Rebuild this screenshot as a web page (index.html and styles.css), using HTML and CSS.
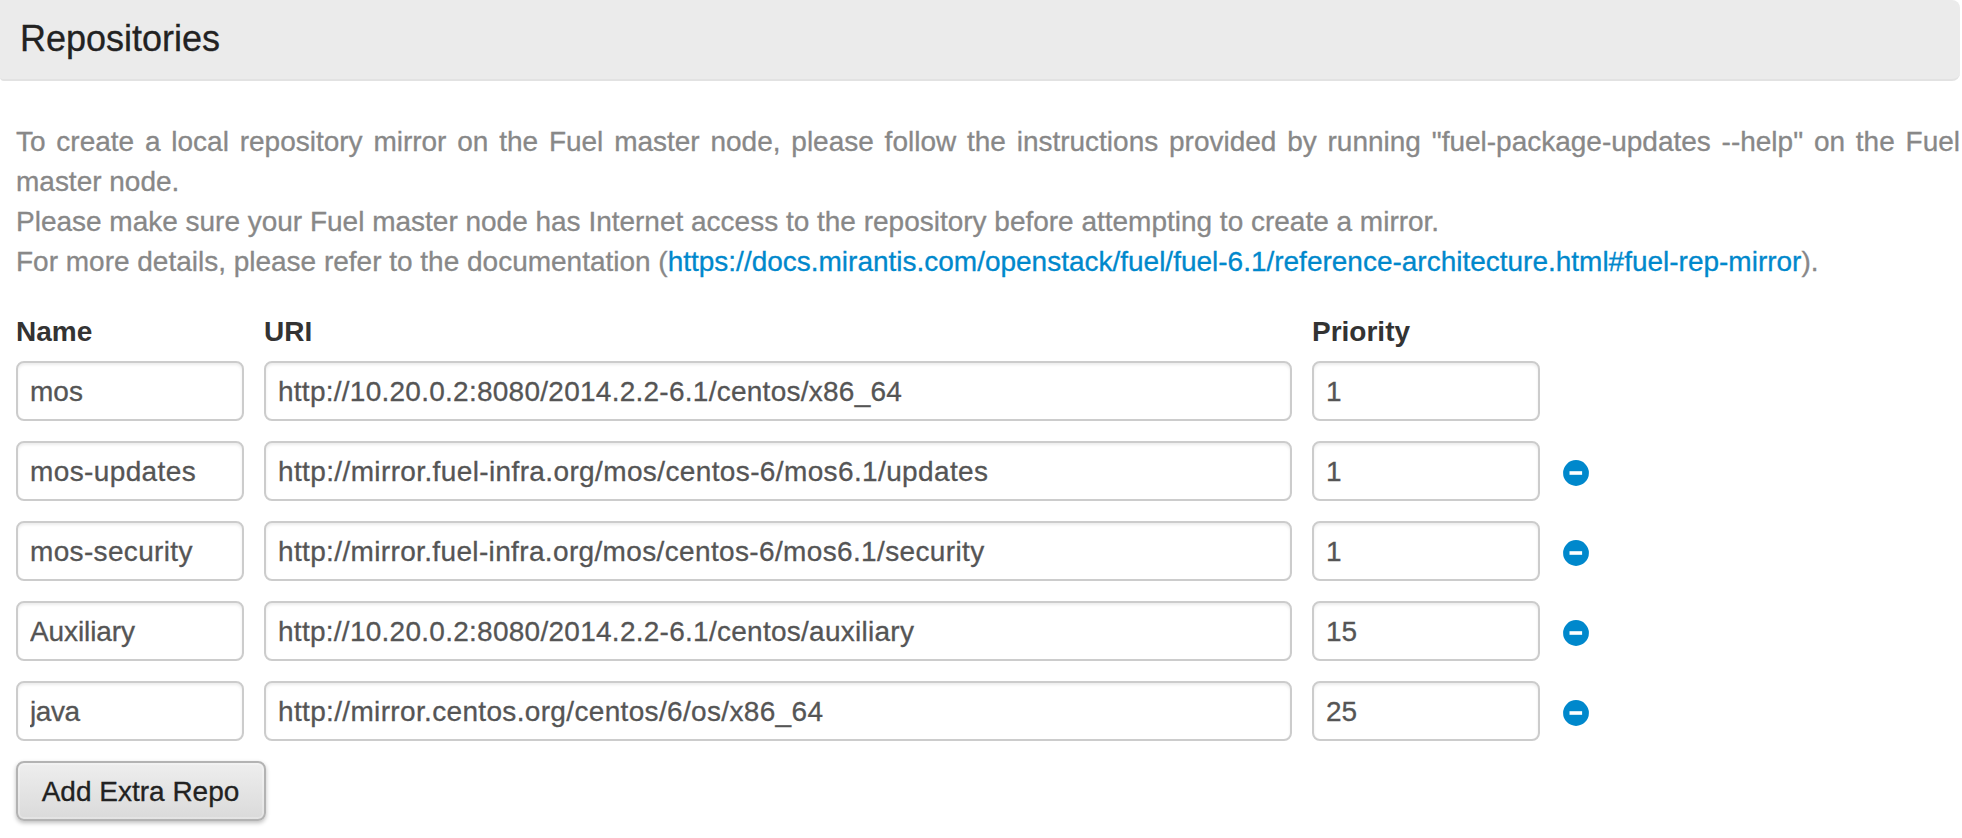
FILE: index.html
```html
<!DOCTYPE html>
<html lang="en">
<head>
<meta charset="utf-8">
<title>Repositories</title>
<link rel="stylesheet" href="styles.css">
</head>
<body>
<svg class="icon-defs" aria-hidden="true">
  <symbol id="minus" viewBox="0 0 26 26">
    <circle cx="13" cy="13" r="12.9" fill="#0088cc"/>
    <rect x="6.5" y="11.2" width="12.6" height="3.6" fill="#fff"/>
  </symbol>
</svg>
<header class="section-header"><h1>Repositories</h1></header>
<main class="section">
  <div class="description">
    <p class="intro">To create a local repository mirror on the Fuel master node, please follow the instructions provided by running "fuel-package-updates --help" on the Fuel master node.</p>
    <p class="access">Please make sure your Fuel master node has Internet access to the repository before attempting to create a mirror.</p>
    <p class="details">For more details, please refer to the documentation (<a href="#">https://docs.mirantis.com/openstack/fuel/fuel-6.1/reference-architecture.html#fuel-rep-mirror</a>).</p>
  </div>
  <form class="repos">
    <div class="row labels"><label>Name</label><label>URI</label><label>Priority</label></div>
    <div class="row mos">
      <input class="name" type="text" value="mos"><input class="uri" type="text" value="http://10.20.0.2:8080/2014.2.2-6.1/centos/x86_64"><input type="text" value="1">
    </div>
    <div class="row updates">
      <input class="name" type="text" value="mos-updates"><input class="uri" type="text" value="http://mirror.fuel-infra.org/mos/centos-6/mos6.1/updates"><input type="text" value="1">
      <svg class="remove"><use href="#minus"/></svg>
    </div>
    <div class="row security">
      <input class="name" type="text" value="mos-security"><input class="uri" type="text" value="http://mirror.fuel-infra.org/mos/centos-6/mos6.1/security"><input type="text" value="1">
      <svg class="remove"><use href="#minus"/></svg>
    </div>
    <div class="row auxiliary">
      <input class="name" type="text" value="Auxiliary"><input class="uri" type="text" value="http://10.20.0.2:8080/2014.2.2-6.1/centos/auxiliary"><input type="text" value="15">
      <svg class="remove"><use href="#minus"/></svg>
    </div>
    <div class="row java">
      <input class="name" type="text" value="java"><input class="uri" type="text" value="http://mirror.centos.org/centos/6/os/x86_64"><input type="text" value="25">
      <svg class="remove"><use href="#minus"/></svg>
    </div>
    <button class="add" type="button">Add Extra Repo</button>
  </form>
</main>
</body>
</html>
```
FILE: styles.css
```css
* { box-sizing: border-box; }
body {
  min-height: 838px;
  margin: 0;
  background: #fff;
  color: #333;
  font: 28px/40px "Liberation Sans", Arial, sans-serif;
  -webkit-text-stroke: .3px;
}
.icon-defs { display: none; }
.section-header {
  height: 81px;
  margin-right: 2px;
  padding: 19px 20px 0;
  background: #ebebeb;
  border-bottom: 2px solid #e2e2e2;
  border-radius: 0 8px 8px 4px;
}
.section-header h1 {
  margin: 0;
  color: #222;
  font-size: 36px;
  font-weight: 400;
  line-height: 40px;
}
.section { padding: 41px 2px 0 16px; }
.description { color: #888; margin-bottom: 30px; letter-spacing: -.008px; }
.description p { margin: 0; text-align: justify; }
.description a { color: #0088cc; text-decoration: none; }
.row {
  display: grid;
  grid-template-columns: 228px 1028px 228px 26px;
  column-gap: 20px;
  align-items: center;
  margin-bottom: 20px;
}
.labels { margin-bottom: 9px; font-weight: 700; -webkit-text-stroke: 0; }
input {
  width: 100%;
  height: 60px;
  margin: 0;
  padding: 2px 12px 0;
  border: 2px solid #ccc;
  border-radius: 8px;
  background: #fff;
  box-shadow: inset 0 2px 3px rgba(0, 0, 0, .075);
  color: #555;
  font: inherit;
}
.mos .uri { letter-spacing: .257px; }
.updates .uri { letter-spacing: .375px; }
.security .uri { letter-spacing: .355px; }
.auxiliary .uri { letter-spacing: .265px; }
.java .uri { letter-spacing: .34px; }
.updates .name { letter-spacing: .38px; }
.security .name { letter-spacing: .34px; }
.auxiliary .name { letter-spacing: -.1px; }
.java .name { letter-spacing: -.4px; }
.remove { width: 26px; height: 26px; margin: 4px 0 0 3px; }
.add {
  display: block;
  width: 250px;
  height: 60px;
  padding: 1px 1px 0 0;
  border: 2px solid #b3b3b3;
  border-radius: 8px;
  background: linear-gradient(#eee, #dadada);
  box-shadow: inset 0 0 0 2px rgba(255, 255, 255, .25), 0 2px 4px rgba(0, 0, 0, .25);
  color: #222;
  font: inherit;
}
```
